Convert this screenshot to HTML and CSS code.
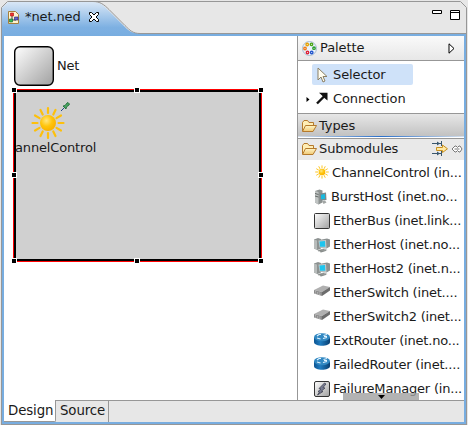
FILE: index.html
```
<!DOCTYPE html>
<html lang="en">
<head>
<meta charset="utf-8">
<title>net.ned</title>
<link rel="stylesheet" href="styles.css">
</head>
<body>
<svg class="defs" width="0" height="0" aria-hidden="true">
  <defs>
    <linearGradient id="tabfill" x1="0" y1="0" x2="0" y2="1"><stop offset="0" stop-color="#d9e7f6"/><stop offset=".75" stop-color="#7db0e2"/><stop offset="1" stop-color="#78ade0"/></linearGradient>
    <linearGradient id="gray" x1="0" y1="0" x2="1" y2="1"><stop offset="0" stop-color="#fff"/><stop offset="1" stop-color="#a0a0a0"/></linearGradient>
    <linearGradient id="folder" x1="0" y1="0" x2="0" y2="1"><stop offset="0" stop-color="#fff6c9"/><stop offset="1" stop-color="#f0c873"/></linearGradient>
    <linearGradient id="blue" x1="0" y1="0" x2="1" y2="0"><stop offset="0" stop-color="#0c5593"/><stop offset=".4" stop-color="#1f7cc0"/><stop offset="1" stop-color="#093e70"/></linearGradient>
    <radialGradient id="sunfill" cx=".4" cy=".35" r=".6"><stop offset="0" stop-color="#ffe680"/><stop offset=".6" stop-color="#ffc50c"/><stop offset="1" stop-color="#fbb400"/></radialGradient>
    <symbol id="sun" viewBox="0 0 34 34">
      <path stroke="#fdc00c" stroke-width="2.2" stroke-linecap="round" d="M17 2v5M17 27v5M1.500 17h5M27.500 17h5M9.500 4l2.200 4.500M24.500 4l-2.200 4.500M4 9.500l4.500 2.600M30 9.500l-4.500 2.600M4 24.500l4.500-2.600M30 24.500l-4.500-2.600M9.500 30l2.200-4.500M24.500 30l-2.200-4.500"/>
      <circle cx="17" cy="17" r="8" fill="url(#sunfill)"/>
    </symbol>
    <symbol id="folder-open" viewBox="0 0 16 14">
      <path d="M1.500 12V3.500l1.500-2h3.500l1.500 2h4.500v3" fill="#ffeeb5" stroke="#b57a2c"/>
      <path d="M1.500 12.500l3-6h11l-3.500 6z" fill="url(#folder)" stroke="#b57a2c"/>
    </symbol>
    <symbol id="tower" viewBox="0 0 16 16">
      <path d="M1 2l4.500-1.500 3 1v12l-4 2L1 13.500z" fill="#8d9291"/>
      <path d="M1 2l3.500 1v12.500L1 13.500z" fill="#c0c4c3"/>
      <path d="M1 4.500l3.500 1M1 7l3.500 1" stroke="#626866"/>
      <path d="M6 4.500l6-1 .5 7.500-6 .5z" fill="#7b898b"/>
      <path d="M7 5.700l4-.7v5l-4 .3z" fill="#19b8dd"/>
      <path d="M8 12l3-.5 1.500 2-3 1.500z" fill="#a2a6a5"/>
    </symbol>
    <symbol id="host" viewBox="0 0 16 16">
      <path d="M0 2.500L4 1l3 1v9.500L3.500 13 0 11.500z" fill="#8d9291"/>
      <path d="M0 2.500l3 1V13l-3-1.500z" fill="#b8bcbb"/>
      <path d="M5 3l8-1.500L16 2.500v7l-3.500 2L5 10.500z" fill="#8b9191"/>
      <path d="M4.500 3.500L12 3l.5 8-7-.5z" fill="#c2c9ca"/>
      <path d="M5.500 4.500L11 4l.3 5.700-5.300.1z" fill="#1fc4ee"/>
      <path d="M3 13l7-1.500 3.500 1.500-6 2.500z" fill="#a8acab"/>
      <path d="M4 14l6-1.300M6 15l6-1.500" stroke="#6b706f" stroke-width=".6"/>
    </symbol>
    <symbol id="bus" viewBox="0 0 16 16"><rect x=".5" y=".5" width="15" height="15" rx="1" fill="url(#gray)" stroke="#333"/></symbol>
    <symbol id="switch" viewBox="0 0 16 12">
      <path d="M0 5L9 .500l7 1.500-8 5z" fill="#b0b0b0"/>
      <path d="M0 5l8 2v4L0 8.500z" fill="#8b8b8b"/>
      <path d="M8 7l8-5v3.500L8 11z" fill="#6c6c6c"/>
      <path d="M1 6.500l6 2M1 8l6 2" stroke="#d1d1d1" stroke-width=".7" stroke-dasharray="1 1"/>
    </symbol>
    <symbol id="router" viewBox="0 0 16 14">
      <path d="M0 4v5c0 5 16 5 16 0V4z" fill="url(#blue)"/>
      <ellipse cx="8" cy="4.200" rx="8" ry="4" fill="#3288c2"/>
      <path d="M3 3l2-1.500h2M9.500 2.500L13 1.500M3 5l3.500 1M9 5.500l4-1M10 3.500h3" stroke="#e0f3ff" fill="none" stroke-width="1.100"/>
    </symbol>
    <symbol id="failure" viewBox="0 0 16 16">
      <rect x=".5" y=".5" width="15" height="15" rx="1.500" fill="url(#gray)" stroke="#333"/>
      <path d="M10.500 2L5 7.500l2 .5-3 2.500 1.500.5L3.500 14 9 10.500 7.500 10l3.500-3-2-.5L12 3z" fill="#777b91" stroke="#353849" stroke-width=".7"/>
    </symbol>
  </defs>
</svg>

<div class="window">
  <header class="tabbar">
    <svg class="tabshape" width="468" height="36" viewBox="0 0 468 36">
      <path d="M1.500 37V7.500L7.500 1.500H460.500l6 6V37z" fill="#e7e7e7" stroke="#979797"/>
      <path d="M2 36V8l6-6h85c7 0 10 3 16 9l16 16c5 5 7 6 15 6.500h326V36z" fill="url(#tabfill)"/>
      <path d="M93 1.500c7 0 11 3 16 8l16 16c5 5 8 8 15 8h326" fill="none" stroke="#979797"/>
    </svg>
    <div class="tab">
      <svg width="12" height="15" viewBox="0 0 12 15"><path d="M.5 1.500h7l3 3v9H.500z" fill="#fff4cf" stroke="#a5803c"/><path d="M4 5v5h4" fill="none" stroke="#444"/><path d="M2.500 3h3v3h-3z" fill="#e33" stroke="#a11" stroke-width=".6"/><path d="M1.500 9h3v3h-3z" fill="#3b5" stroke="#163" stroke-width=".6"/><path d="M6.500 7h3.500v3H6.500z" fill="#66c" stroke="#227" stroke-width=".6"/></svg>
      <span class="tabname">*net.ned</span>
      <svg width="12" height="12" viewBox="0 0 12 12"><path d="M1.500 1.500h2L6 4l2.500-2.500h2v2L8 6l2.500 2.500v2h-2L6 8l-2.500 2.500h-2v-2L4 6 1.500 3.500z" fill="#fff" stroke="#000"/></svg>
    </div>
    <svg class="winbtns" width="30" height="13" viewBox="0 0 30 13"><path d="M1.500 1.500h9v3h-9zM19.500 1.500h9v9h-9zM19.500 3.500h9" fill="#fff" stroke="#000"/></svg>
  </header>

  <main class="editor">
    <section class="canvas">
      <div class="nethead"><svg width="40" height="40" viewBox="0 0 40 40"><rect x=".7" y=".7" width="38.600" height="38.600" rx="5.500" fill="url(#gray)" stroke="#000" stroke-width="1.400"/></svg><span>Net</span></div>
      <div class="module">
        <svg class="sun" width="34" height="34"><use href="#sun"/></svg>
        <svg class="pin" width="9" height="9" viewBox="0 0 9 9"><path d="M0 9l3-3" stroke="#234a8a"/><path d="M2 4l2-.5L6 1l1-.5L8.500 2l-.5 1-2.500 2-.5 2z" fill="#4aa564" stroke="#17642e" stroke-width=".8"/></svg>
        <div class="sublabel"><span>annelControl</span></div>
        <i class="h nw"></i><i class="h n"></i><i class="h ne"></i><i class="h w"></i><i class="h e"></i><i class="h sw"></i><i class="h s"></i><i class="h se"></i>
      </div>
    </section>

    <aside class="palette">
      <div class="palhead">
        <svg width="15" height="15" viewBox="0 0 15 15"><circle cx="7.500" cy="7.500" r="7" fill="#e9f2fc" stroke="#a9bcd1"/><g fill="#fff" stroke-width="1.400"><circle cx="5.200" cy="3.500" r="1.200" stroke="#e8a000"/><circle cx="9.500" cy="3.300" r="1.200" stroke="#4ba614"/><circle cx="3" cy="7.500" r="1.200" stroke="#f17b19"/><circle cx="12" cy="7.200" r="1.200" stroke="#279c29"/><circle cx="5.500" cy="11.500" r="1.200" stroke="#df2437"/><circle cx="9.700" cy="11.500" r="1.200" stroke="#2356cd"/></g></svg>
        <span>Palette</span>
        <svg class="arrow" width="7" height="11" viewBox="0 0 7 11"><path d="M1 .800v9.400l5-4.700z" fill="#fff" stroke="#000"/></svg>
      </div>
      <div class="tools">
        <div class="tool selected"><svg width="11" height="16" viewBox="0 0 11 16"><path d="M1 1v12l3-3 2 5 2-1-2-4.500h4z" fill="#fffdf0" stroke="#8b8064"/></svg><span>Selector</span></div>
        <div class="tool connection"><svg width="27" height="13" viewBox="0 0 27 13"><path d="M.5 5v5l3-2.500z"/><path d="M11 11.500l8-8" stroke="#111" stroke-width="2.400"/><path d="M13 .800h8.500V8.500L19 6.500l-3.500-3.500z" fill="#111"/></svg><span>Connection</span></div>
      </div>
      <div class="drawer types"><svg width="16" height="14"><use href="#folder-open"/></svg><span>Types</span></div>
      <div class="divider"></div>
      <div class="drawer submodules"><svg width="16" height="14"><use href="#folder-open"/></svg><span>Submodules</span>
        <svg class="filter" width="31" height="16" viewBox="0 0 31 16"><path d="M0 2.500h9M0 12.500h9M9.500 0v5M9.500 10v5" stroke="#39566d" fill="none"/><path d="M5 .500L8 2.500 5 4.500zM5 10.500l3 2-3 2z" fill="#39566d"/><path d="M4.500 6.500h6v-2.500l5 3.800-5 3.700V9.500h-6z" fill="#ffe9a4" stroke="#c79020"/><path d="M23 5l-3 3 3 3h1l1.500-1.500L27 11h1l2-3-2-3h-1l-1.500 1.500L24 5zM22.500 8h5" fill="#fff" stroke="#777"/></svg></div>
      <ul class="items">
        <li><svg width="16" height="16" viewBox="0 0 16 16"><use href="#sun" x="1" y="0" width="14" height="14"/></svg><span class="l1">ChannelControl (in...</span></li>
        <li><svg width="16" height="16"><use href="#tower"/></svg><span class="l2">BurstHost (inet.no...</span></li>
        <li><svg width="16" height="16"><use href="#bus"/></svg><span>EtherBus (inet.link...</span></li>
        <li><svg width="16" height="16"><use href="#host"/></svg><span>EtherHost (inet.no...</span></li>
        <li><svg width="16" height="16"><use href="#host"/></svg><span>EtherHost2 (inet.n...</span></li>
        <li><svg width="16" height="16" viewBox="0 0 16 16"><use href="#switch" width="16" height="12"/></svg><span>EtherSwitch (inet....</span></li>
        <li><svg width="16" height="16" viewBox="0 0 16 16"><use href="#switch" width="16" height="12"/></svg><span>EtherSwitch2 (inet...</span></li>
        <li><svg width="16" height="16" viewBox="0 0 16 16"><use href="#router" width="16" height="14"/></svg><span>ExtRouter (inet.no...</span></li>
        <li><svg width="16" height="16" viewBox="0 0 16 16"><use href="#router" width="16" height="14"/></svg><span>FailedRouter (inet....</span></li>
        <li><svg width="16" height="16"><use href="#failure"/></svg><span>FailureManager (in...</span></li>
      </ul>
      <div class="scrolldown"><svg width="7" height="4" viewBox="0 0 7 4"><path d="M0 0h7L3.500 4z"/></svg></div>
    </aside>
  </main>

  <footer class="pages"><div class="page active">Design</div><div class="page">Source</div><div class="rest"></div></footer>
</div>
</body>
</html>
```

FILE: styles.css
```
* { box-sizing: border-box; }
body { margin: 0; width: 468px; height: 425px; overflow: hidden; background: #e7e7e7; font: 13px/16px "DejaVu Sans", sans-serif; color: #1a1a1a; }
svg { display: block; flex: none; }
.defs { position: absolute; }
span { white-space: nowrap; }
.window { width: 468px; height: 425px; display: flex; flex-direction: column; }
.tabbar { position: relative; height: 36px; display: flex; justify-content: space-between; }
.tabshape { position: absolute; inset: 0; }
.tab { position: relative; display: flex; align-items: center; height: 34px; padding-left: 8px; }
.tabname { margin-left: 5px; width: 57px; margin-right: 6px; letter-spacing: -.1px; }
.winbtns { position: relative; margin: 9px 7px 0 0; }
.editor { height: 364px; display: flex; border-left: 1px solid #979797; border-right: 1px solid #979797; margin: 0 1px; background: #78ade0; padding: 0 2px; }
.canvas { flex: none; width: 293px; background: #fff; padding: 10px 0 0 10px; overflow: hidden; }
.nethead { display: flex; align-items: center; height: 40px; gap: 3px; letter-spacing: -.2px; }
.module { position: relative; width: 249px; height: 173px; margin: 3px 0 0 -1px; background: #d0d0d0; border: 1px solid #f00; box-shadow: inset 0 0 0 2px #000; padding: 16px 0 0 17px; }
.pin { position: absolute; left: 47px; top: 12px; }
.sublabel { margin-left: -16px; width: 100px; letter-spacing: -.15px; }
.h { position: absolute; width: 4px; height: 4px; background: #000; outline: 1px solid #fff; }
.nw, .n, .ne { top: -2px; }
.w, .e { top: 83px; }
.sw, .s, .se { top: 169px; }
.nw, .w, .sw { left: -2px; }
.n, .s { left: 121px; }
.ne, .e, .se { left: 245px; }
.palette { position: relative; flex: 1; min-width: 0; background: #fff; border-left: 1px solid #979797; letter-spacing: -.1px; }
.palhead { height: 25px; display: flex; align-items: center; padding: 0 9px 0 4px; gap: 3px; background: linear-gradient(#fafafa, #e7e7e7); border-bottom: 1px solid #979797; }
.arrow { margin-left: auto; }
.tools { height: 52px; padding-top: 3px; }
.tool { display: flex; align-items: center; height: 21px; }
.selected { margin-left: 14px; width: 101px; background: #cfe2f9; border-radius: 2px; padding-left: 5px; gap: 5px; }
.connection { margin: 3px 0 0 8px; }
.drawer { display: flex; align-items: center; padding-left: 3px; gap: 2px; }
.types { height: 23px; border-top: 1px solid #979797; background: linear-gradient(#e7e7e7, #c2c2c2); padding-top: 2px; }
.divider { height: 2px; background: linear-gradient(#fff0 50%, #fff 50%), linear-gradient(90deg, #d5dfeb, #2b70ca 50%, #d5dfeb); }
.submodules { height: 22px; background: #e9e9e9; border-top: 1px solid #979797; padding-bottom: 1px; }
.filter { margin-left: auto; margin-right: 1px; }
.items { list-style: none; margin: 0; padding: 1px 0 0 16px; letter-spacing: -.2px; }
.items li { display: flex; align-items: center; height: 24px; gap: 3px; }
.l1 { margin-left: -1px; }
.l2 { margin-left: -2px; }
.scrolldown { position: absolute; left: 45px; bottom: 0; width: 76px; height: 7px; background: rgba(160,160,160,.8); display: flex; justify-content: center; padding-top: 2px; }
.pages { height: 25px; margin: 0 1px; display: flex; background: #e7e7e7; border: solid #979797; border-width: 0 1px 1px; box-shadow: inset 2px -2px #78ade0, inset -2px 0 #78ade0; padding: 0 2px 2px; font-size: 13.33px; letter-spacing: -.1px; }
.page { border-top: 1px solid #979797; border-right: 1px solid #979797; padding: 2px 4px 0; width: 53px; }
.page.active { background: #fff; border-top: 0; border-bottom: 1px solid #979797; border-bottom-right-radius: 2px; padding: 3px 0 0 4px; width: 52px; }
.rest { flex: 1; border-top: 1px solid #979797; }
```
